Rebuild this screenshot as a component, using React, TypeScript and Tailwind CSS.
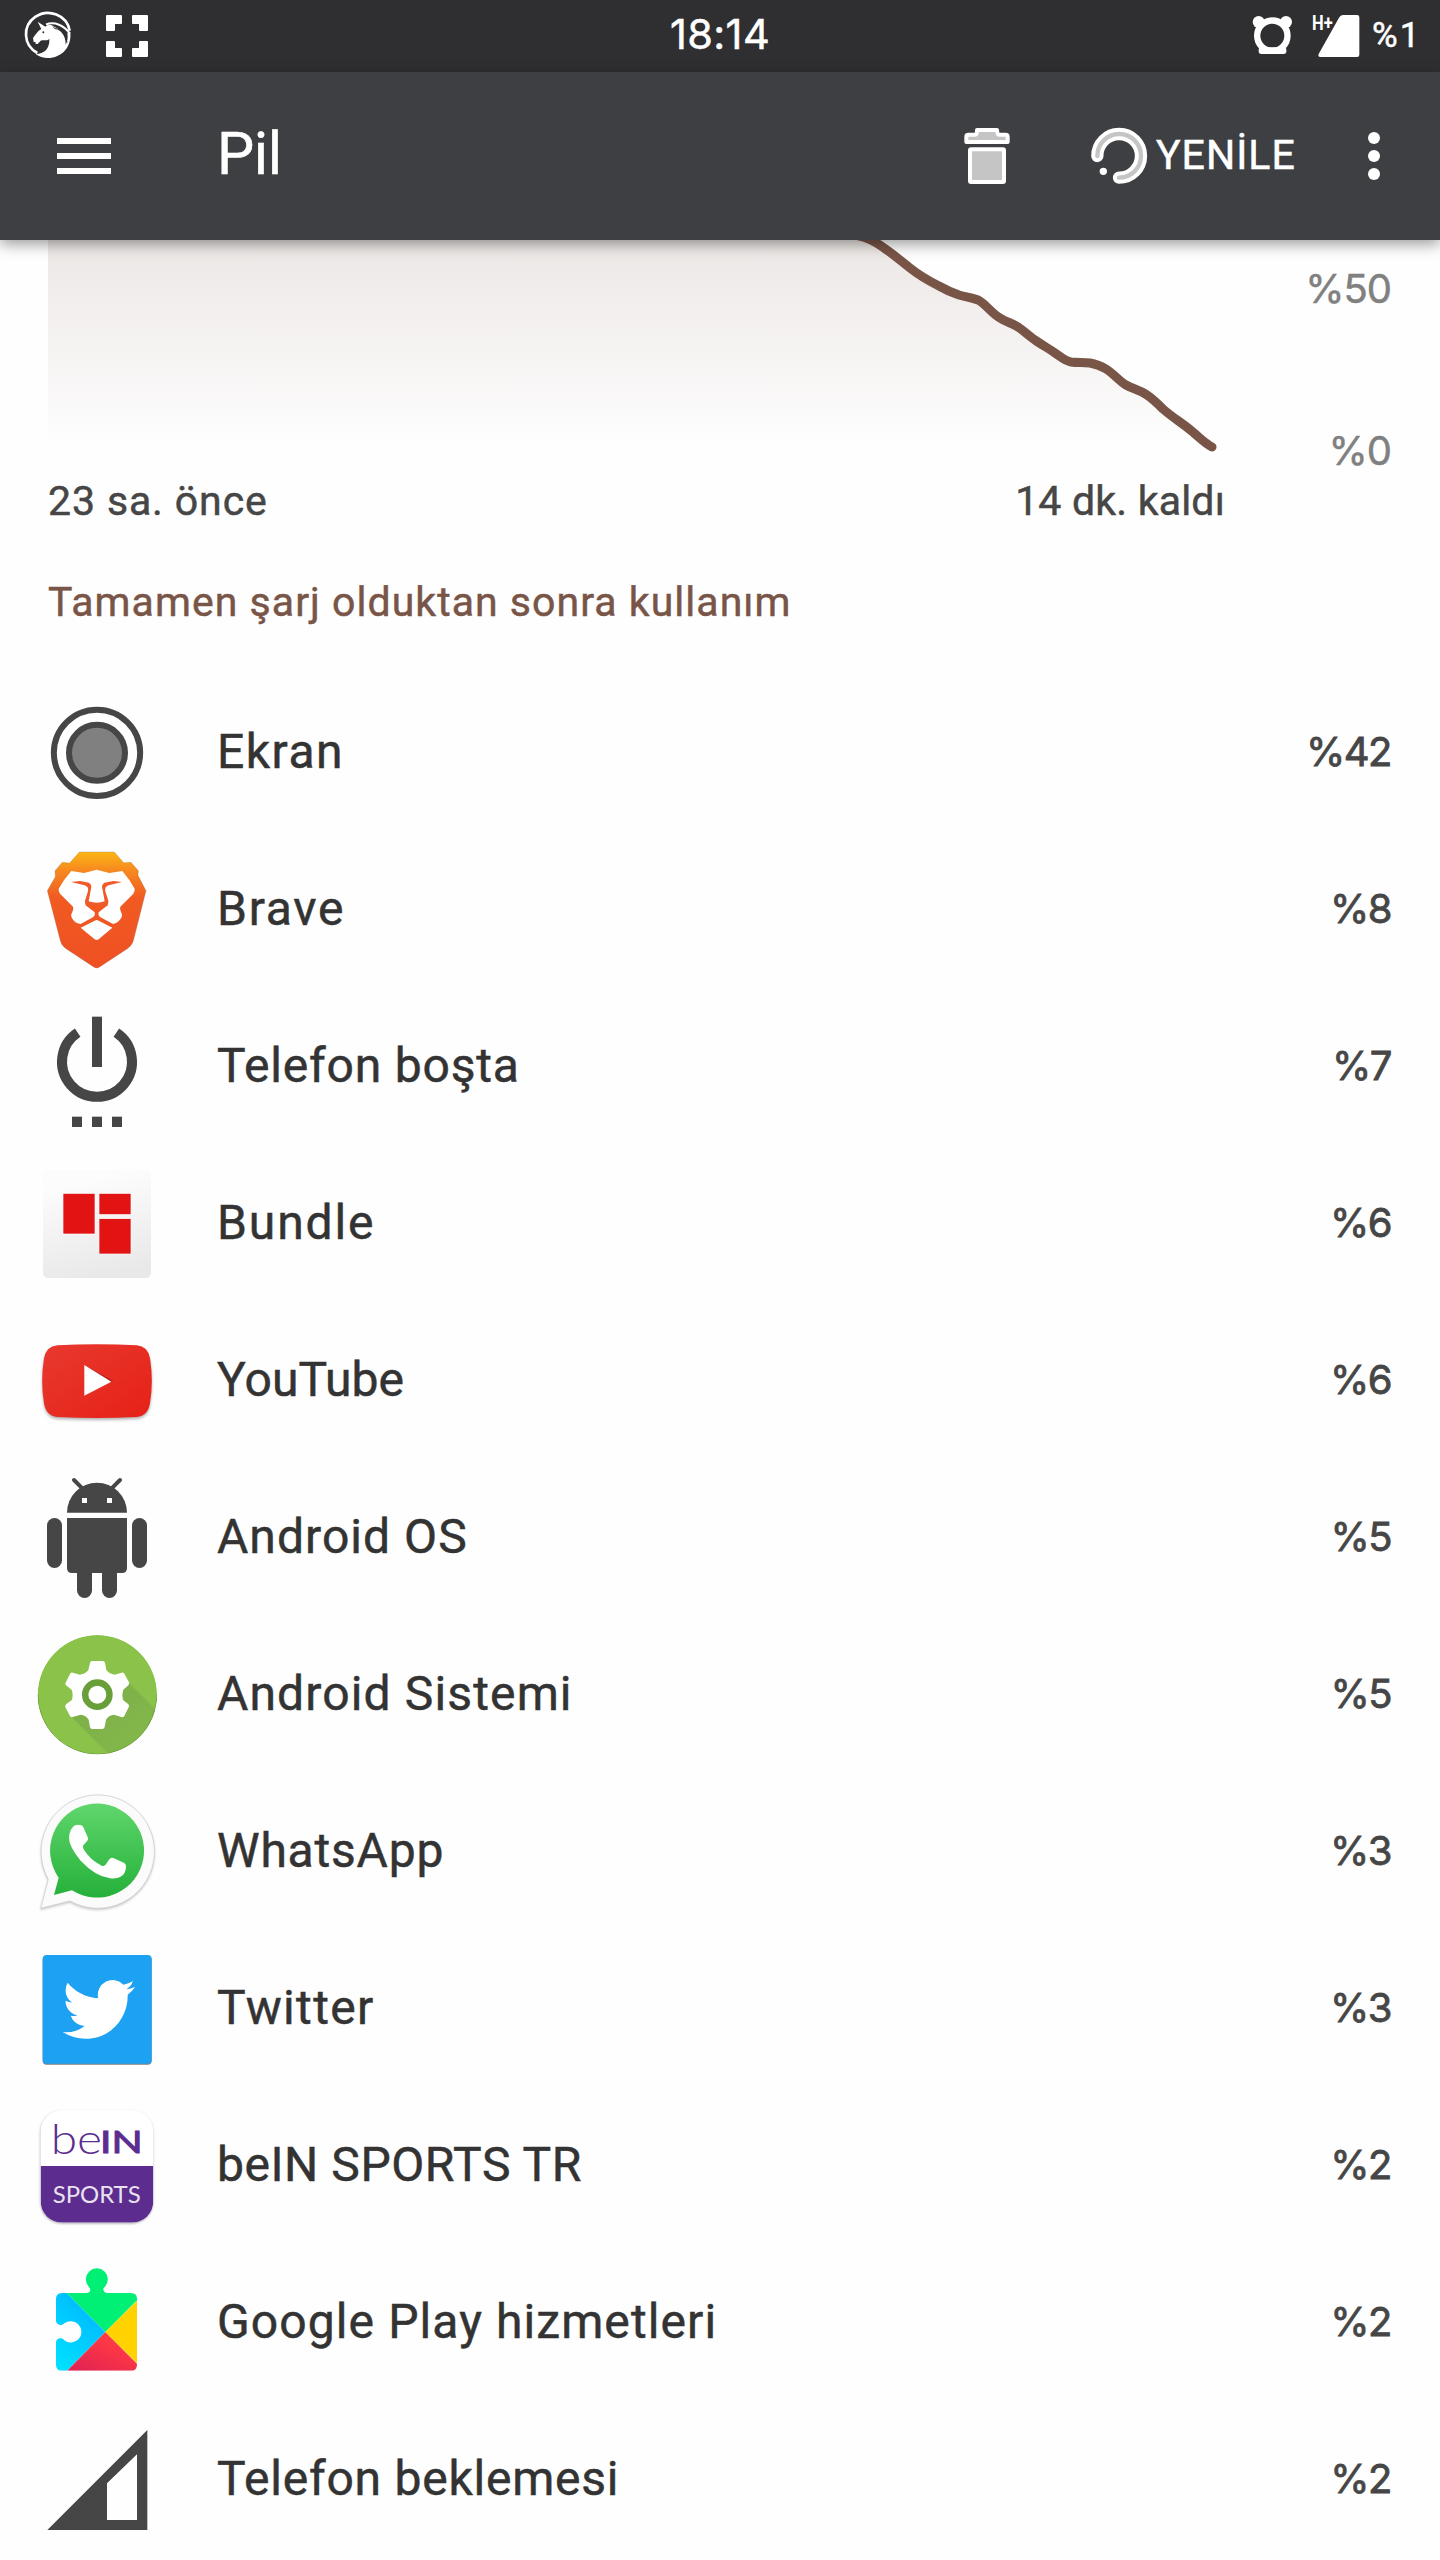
import type { ReactNode } from "react";

/* ---------------------------------------------------------------- */
/* Data                                                             */
/* ---------------------------------------------------------------- */
const apps = [
  { name: "Ekran", usage: "%42", icon: <ScreenIcon />, box: "6 -18 450 471", tracking: "tracking-[1.5px]" },
  { name: "Brave", usage: "%8", icon: <BraveIcon />, box: "6 453 450 471", tracking: "tracking-[1.75px]" },
  { name: "Telefon boşta", usage: "%7", icon: <PowerIcon />, box: "6 -6 450 471", tracking: "tracking-[0.8px]" },
  { name: "Bundle", usage: "%6", icon: <BundleIcon />, box: "6 465 450 471", tracking: "tracking-[1.9px]" },
  { name: "YouTube", usage: "%6", icon: <YouTubeIcon />, box: "6 -24 450 471", tracking: "tracking-[0.1px]" },
  { name: "Android OS", usage: "%5", icon: <AndroidIcon />, box: "6 447 450 471", tracking: "tracking-[1.05px]" },
  { name: "Android Sistemi", usage: "%5", icon: <SystemIcon />, box: "6 -12 450 471", tracking: "tracking-[1.14px]" },
  { name: "WhatsApp", usage: "%3", icon: <WhatsAppIcon />, box: "6 459 450 471", tracking: "tracking-[0.8px]" },
  { name: "Twitter", usage: "%3", icon: <TwitterIcon />, box: "6 0 450 471", tracking: "tracking-[1.35px]" },
  { name: "beIN SPORTS TR", usage: "%2", icon: <BeinIcon />, box: "6 471 450 471", tracking: "tracking-[0.55px]" },
  { name: "Google Play hizmetleri", usage: "%2", icon: <PlayServicesIcon />, box: "6 12 450 471", tracking: "tracking-[1.1px]" },
  { name: "Telefon beklemesi", usage: "%2", icon: <SignalIcon />, box: "6 483 450 471", tracking: "tracking-[0.77px]" },
];

/* ---------------------------------------------------------------- */
/* Page                                                             */
/* ---------------------------------------------------------------- */
export default function App() {
  return (
    <div className="flex h-[2560px] w-[1440px] flex-col overflow-hidden bg-[#fefefe] font-['Roboto',sans-serif] text-[#464646] [-webkit-text-stroke:0.5px]">
      <StatusBar />
      <AppBar />
      <BatteryChart />
      <h2 className="mt-[60px] pl-12 text-[41px] leading-[41px] tracking-[1.04px] text-[#795548]">
        Tamamen şarj olduktan sonra kullanım
      </h2>
      <ul className="mt-[51px]">
        {apps.map((a) => (
          <UsageRow key={a.name} name={a.name} usage={a.usage} box={a.box} tracking={a.tracking}>
            {a.icon}
          </UsageRow>
        ))}
      </ul>
    </div>
  );
}

/* ---------------------------------------------------------------- */
/* Status bar                                                       */
/* ---------------------------------------------------------------- */
function StatusBar() {
  return (
    <div className="grid h-[72px] shrink-0 grid-cols-[1fr_auto_1fr] bg-[#2f2f31] text-white">
      <svg className="h-[72px] w-[160px]" viewBox="0 0 480 216" fill="#fff">
        <path d="M209 92A66 64 0 1 0 112 159" fill="none" stroke="#fff" strokeWidth="8" />
        <path d="M113 65L136 80C142 74 150 73 158 77C180 88 198 104 197 134C203 122 204 112 202 100L211 96C216 142 184 174 144 174C130 174 117 170 107 162C132 162 150 146 148 116C141 124 130 119 122 122L113 132L106 131L107 126L101 126L99 114C108 103 112 94 124 87Z" />
        <path d="M138 73C164 64 192 76 209 100" fill="none" stroke="#fff" strokeWidth="6" />
        <path d="M160 80Q162 88 172 87Q196 96 201 128" fill="none" stroke="#2f2f31" strokeWidth="3" />
        <circle cx="130" cy="97" r="3" fill="#2f2f31" />
        <g stroke="#fff" strokeWidth="6" strokeLinejoin="round">
          <path d="M321 48h42v21h-21v21h-21z" />
          <path d="M441 48h-42v21h21v21h21z" />
          <path d="M321 168h42v-21h-21v-21h-21z" />
          <path d="M441 168h-42v-21h21v-21h21z" />
        </g>
      </svg>
      <span className="self-center pb-0.5 font-['Inter',sans-serif] text-[41.5px] leading-none tracking-[0.4px]">
        18:14
      </span>
      <div className="flex items-center justify-end pr-6">
        <svg className="h-[72px] w-[120px]" viewBox="620 0 360 216" fill="#fff">
          <circle cx="699" cy="107" r="45.5" fill="none" stroke="#fff" strokeWidth="19" />
          <circle cx="658" cy="66" r="18" />
          <circle cx="740" cy="66" r="18" />
          <rect x="658" y="142" width="83" height="20" rx="8" />
          <path d="M911 45H953Q960 45 960 52V164Q960 171 953 171H843Q835 171 838 162L899 53Q903 45 911 45Z" />
          <text x="818" y="90" fontSize="62" fontWeight="700" textLength="62" lengthAdjust="spacingAndGlyphs">
            H+
          </text>
        </svg>
        <span className="w-[50px] pb-0.5 pl-[6px] text-[35px] leading-none tracking-[2px]">%1</span>
      </div>
    </div>
  );
}

/* ---------------------------------------------------------------- */
/* App bar                                                          */
/* ---------------------------------------------------------------- */
function AppBar() {
  return (
    <header className="relative z-10 flex h-[168px] shrink-0 items-center bg-[#3e3f43] pr-[55px] text-white shadow-[0_4px_14px_rgba(0,0,0,0.4)]">
      <svg className="h-[168px] w-[217px]" viewBox="0 216 651 504" fill="#fff">
        <rect x="171" y="414" width="162" height="18" />
        <rect x="171" y="459" width="162" height="18" />
        <rect x="171" y="504" width="162" height="18" />
      </svg>
      <h1 className="pb-1.5 text-[59px] leading-none tracking-[-0.4px]">Pil</h1>
      <svg className="ml-auto h-[168px] w-[55px]" viewBox="960 216 165 504">
        <g fill="#c5c5c5" stroke="#fff" strokeWidth="12" strokeLinejoin="round">
          <path d="M979 410Q979 404 985 404H1007Q1011 403 1011 390H1071Q1072 403 1076 404H1097Q1103 404 1103 410V426H979Z" />
          <rect x="990" y="448" width="102" height="98" rx="3" />
        </g>
      </svg>
      <svg className="ml-[75px] h-[168px] w-[60px]" viewBox="150 216 180 504" fill="none" strokeLinecap="round">
        <path d="M172 468A65.5 65.5 0 1 1 237 533" stroke="#fff" strokeWidth="37" />
        <path d="M172 468A65.5 65.5 0 1 1 237 533" stroke="#c5c5c5" strokeWidth="13" />
        <circle cx="190" cy="514" r="11" fill="#fff" />
      </svg>
      <span className="ml-[6px] w-[207px] pb-0.5 text-[41px] leading-none tracking-[1px]">YENİLE</span>
      <svg className="h-[168px] w-[22px]" viewBox="969 216 66 504" fill="#fff">
        <circle cx="1002" cy="414" r="18" />
        <circle cx="1002" cy="468" r="18" />
        <circle cx="1002" cy="522" r="18" />
      </svg>
    </header>
  );
}

/* ---------------------------------------------------------------- */
/* Battery level over time                                          */
/* ---------------------------------------------------------------- */
const LEVEL =
  "C866 -4 876 2 884 8C893 14 901 21 910 28C920 36 929 41 939 46C946 50 953 53 959 55C966 57 972 58 978 60C986 64 991 73 1000 78C1006 82 1012 83 1018 87C1024 91 1029 96 1035 100C1042 105 1048 108 1055 113C1061 117 1065 121 1071 122C1078 123 1083 122 1090 123C1096 124 1101 126 1106 129C1114 134 1119 141 1126 145C1133 149 1140 150 1147 155C1153 159 1158 164 1163 169C1173 178 1184 184 1194 193C1201 199 1206 204 1212 207";

function BatteryChart() {
  return (
    <section className="shrink-0">
      <div className="flex h-[241px] justify-between">
        <svg className="h-[241px] w-[1240px]" viewBox="0 0 1240 241">
          <defs>
            <linearGradient id="level" x1="0" y1="0" x2="0" y2="1">
              <stop offset="0" stopColor="#795548" stopOpacity="0.14" />
              <stop offset="1" stopColor="#795548" stopOpacity="0" />
            </linearGradient>
          </defs>
          <path d={`M48 -6H853${LEVEL}H48Z`} fill="url(#level)" />
          <path d={`M853 -5${LEVEL}`} fill="none" stroke="#795548" strokeWidth="9" strokeLinecap="round" />
        </svg>
        <div className="flex flex-col items-end gap-[122px] pr-[49px] pt-[29px] font-['Inter',sans-serif] text-[40px] leading-none tracking-[-1px] text-[#808080]">
          <span>%50</span>
          <span>%0</span>
        </div>
      </div>
      <div className="flex w-[1225px] justify-between pl-12 text-[41px] leading-[41px]">
        <span className="tracking-[0.88px]">23 sa. önce</span>
        <span className="tracking-[0.2px]">14 dk. kaldı</span>
      </div>
    </section>
  );
}

/* ---------------------------------------------------------------- */
/* List row                                                         */
/* ---------------------------------------------------------------- */
type UsageRowProps = {
  name: string;
  usage: string;
  box: string;
  tracking: string;
  children: ReactNode;
};

function UsageRow({ name, usage, box, tracking, children }: UsageRowProps) {
  return (
    <li className="flex h-[157px] items-center pl-[22px] pr-[49px]">
      <svg className="h-[157px] w-[150px] shrink-0 [-webkit-text-stroke:0]" viewBox={box}>
        {children}
      </svg>
      <span className={`ml-[45px] pb-0.5 text-[48px] leading-none text-[#333] ${tracking}`}>{name}</span>
      <span className="ml-auto pb-0.5 font-['Inter',sans-serif] text-[40px] leading-none tracking-[-1.5px] [-webkit-text-stroke:0.8px]">
        {usage}
      </span>
    </li>
  );
}

/* ---------------------------------------------------------------- */
/* Icons                                                            */
/* ---------------------------------------------------------------- */
function ScreenIcon() {
  return (
    <g stroke="#464646" strokeWidth="18">
      <circle cx="231" cy="218.5" r="129.5" fill="none" />
      <circle cx="231" cy="218.5" r="84" fill="#808080" />
    </g>
  );
}

function BraveIcon() {
  return (
    <>
      <linearGradient id="brave" x1="0" y1="0" x2="0" y2="1">
        <stop offset="0" stopColor="#fbb714" />
        <stop offset="0.15" stopColor="#f68b1f" />
        <stop offset="0.4" stopColor="#f15a22" />
        <stop offset="1" stopColor="#ef5023" />
      </linearGradient>
      <path
        d="M178 516H283L311 548L333 547L355 572L354 586L378 632L340 782Q336 796 322 806L240 860Q230 868 220 860L138 806Q124 796 121 782L82 632L106 590L105 572L127 547L149 549Z"
        fill="url(#brave)"
        stroke="#8a6a5c"
        strokeOpacity="0.4"
        strokeWidth="2"
      />
      <path
        d="M230 569L268 579L307 573Q330 600 344 626Q345 634 340 641L301 680Q298 688 303 696Q309 706 303 715Q294 730 279 732L240 711Q233 705 236 697L263 676H197L224 697Q227 705 220 711L182 732Q166 730 157 716Q150 706 157 696Q162 688 159 680L120 641Q115 634 116 626Q130 600 154 573L192 579Z"
        fill="#fff"
      />
      <path
        d="M153 606L180 603L207 608Q214 612 214 620L206 664Q218 668 230 668Q242 668 254 664L246 620Q246 612 253 608L280 603L306 606L266 616Q253 621 256 634L265 662Q266 670 262 678H198Q194 670 195 662L204 634Q207 621 194 616Z"
        fill="#f0592a"
      />
      <path d="M224 722Q230 718 236 722L277 743L237 777Q230 783 223 777L182 743Z" fill="#fff" />
    </>
  );
}

function PowerIcon() {
  return (
    <g fill="#464646">
      <path d="M173 128A105 105 0 1 0 289 128" fill="none" stroke="#464646" strokeWidth="30" />
      <rect x="216" y="80" width="30" height="151" />
      <rect x="156" y="380" width="30" height="31" />
      <rect x="216" y="380" width="30" height="31" />
      <rect x="276" y="380" width="30" height="31" />
    </g>
  );
}

function BundleIcon() {
  return (
    <>
      <linearGradient id="bundle" x1="0.4" y1="0.1" x2="0.6" y2="1">
        <stop offset="0" stopColor="#fcfcfc" />
        <stop offset="1" stopColor="#e8e8e8" />
      </linearGradient>
      <rect x="69" y="540" width="324" height="324" rx="16" fill="url(#bundle)" />
      <g fill="#e21313" stroke="#fff" strokeWidth="2">
        <rect x="129" y="610" width="96" height="122" />
        <rect x="237" y="610" width="96" height="64" />
        <rect x="237" y="686" width="96" height="106" />
      </g>
    </>
  );
}

function YouTubeIcon() {
  return (
    <>
      <linearGradient id="youtube" x1="0" y1="0" x2="1" y2="1">
        <stop offset="0" stopColor="#e8392f" />
        <stop offset="1" stopColor="#e62117" />
      </linearGradient>
      <path
        className="drop-shadow-[0_6px_5px_rgba(0,0,0,0.3)]"
        d="M112 106Q231 99 350 106Q384 109 390 145Q401 213 390 280Q384 318 350 321Q231 327 112 321Q78 318 72 280Q61 213 72 145Q78 109 112 106Z"
        fill="url(#youtube)"
      />
      <path d="M193 165L280 213L266 219Z" fill="#b3211b" />
      <path d="M193 165L274 215L193 257Z" fill="#fff" />
    </>
  );
}

function AndroidIcon() {
  return (
    <g fill="#464646">
      <path d="M141 608A90 90 0 0 1 321 608Z" />
      <path d="M162 510L190 538M300 510L272 538" stroke="#464646" strokeWidth="12" strokeLinecap="round" />
      <rect x="186" y="564" width="15" height="15" fill="#fefefe" />
      <rect x="261" y="564" width="15" height="15" fill="#fefefe" />
      <path d="M141 624H321V774Q321 789 306 789H156Q141 789 141 774Z" />
      <rect x="81" y="624" width="45" height="150" rx="22.5" />
      <rect x="336" y="624" width="45" height="150" rx="22.5" />
      <rect x="171" y="740" width="45" height="124" rx="22.5" />
      <rect x="246" y="740" width="45" height="124" rx="22.5" />
    </g>
  );
}

function SystemIcon() {
  return (
    <>
      <clipPath id="system">
        <circle cx="232" cy="224" r="179" />
      </clipPath>
      <linearGradient id="system-shade" x1="0" y1="0" x2="1" y2="1">
        <stop offset="0" stopColor="#7cad48" />
        <stop offset="0.4" stopColor="#80b24a" />
        <stop offset="1" stopColor="#87bd4a" />
      </linearGradient>
      <g clipPath="url(#system)">
        <circle cx="232" cy="224" r="179" fill="#8bc34a" />
        <path d="M152 289L328 190L440 302V440H303Z" fill="url(#system-shade)" />
        <path d="M53 222A179 179 0 0 0 411 222" fill="none" stroke="#6a9a3a" strokeWidth="3" transform="translate(0 2)" />
      </g>
      <path
        d="M216 123H248Q254 123 255 129L259 150Q268 162 284 164L305 158Q310 156 313 161L327 187Q329 192 325 196L310 209Q304 225 310 241L325 253Q329 258 326 262L313 288Q309 293 304 291L282 284Q266 286 258 299L254 321Q252 327 247 327H217Q211 327 210 321L206 299Q198 286 182 284L158 291Q154 293 150 288L137 263Q134 258 138 253L155 241Q161 225 155 209L138 196Q134 192 137 188L150 162Q153 157 158 158L180 164Q196 162 205 150L210 129Q211 123 216 123Z"
        fill="#fff"
      />
      <circle cx="232" cy="224" r="36.5" fill="none" stroke="#689f38" strokeWidth="19" />
    </>
  );
}

function WhatsAppIcon() {
  return (
    <>
      <linearGradient id="whatsapp" x1="0" y1="0" x2="0" y2="1">
        <stop offset="0" stopColor="#60d66c" />
        <stop offset="1" stopColor="#25b03a" />
      </linearGradient>
      <path
        className="drop-shadow-[0_4px_3px_rgba(0,0,0,0.22)]"
        d="M85 778A170 170 0 1 1 150 843L62 865Z"
        fill="#fbfbfb"
        stroke="#c8c8c8"
        strokeWidth="2"
        strokeLinejoin="round"
      />
      <path d="M116 773A141 141 0 1 1 156 811L102 825Z" fill="url(#whatsapp)" />
      <path
        d="M165 616Q175 612 184 616Q188 618 190 622L203 651Q206 657 202 662L190 676Q187 682 191 688Q210 720 245 737Q251 740 256 735L268 718Q273 711 280 714L313 729Q319 733 318 741Q317 757 308 766Q292 778 270 775Q225 768 182 722Q148 682 147 655Q148 626 165 616Z"
        fill="#fff"
      />
    </>
  );
}

function TwitterIcon() {
  return (
    <>
      <rect
        className="drop-shadow-[0_3px_2px_rgba(0,0,0,0.5)]"
        x="68"
        y="75"
        width="327"
        height="326"
        rx="12"
        fill="#1da1f2"
      />
      <path
        transform="translate(128 129.5) scale(9.05)"
        d="M23.953 4.57a10 10 0 01-2.825.775 4.958 4.958 0 002.163-2.723c-.951.555-2.005.959-3.127 1.184a4.92 4.92 0 00-8.384 4.482C7.69 8.095 4.067 6.13 1.64 3.162a4.822 4.822 0 00-.666 2.475c0 1.71.87 3.213 2.188 4.096a4.904 4.904 0 01-2.228-.616v.06a4.923 4.923 0 003.946 4.827 4.996 4.996 0 01-2.212.085 4.936 4.936 0 004.604 3.417 9.867 9.867 0 01-6.102 2.105c-.39 0-.779-.023-1.17-.067a13.995 13.995 0 007.557 2.209c9.053 0 13.998-7.496 13.998-13.985 0-.21 0-.42-.015-.63A9.935 9.935 0 0024 4.59z"
        fill="#fff"
      />
    </>
  );
}

function BeinIcon() {
  return (
    <>
      <clipPath id="bein">
        <rect x="62" y="540" width="338" height="338" rx="64" />
      </clipPath>
      <rect
        className="drop-shadow-[-1px_3px_3px_rgba(0,0,0,0.3)]"
        x="62"
        y="540"
        width="338"
        height="338"
        rx="64"
        fill="#fff"
      />
      <rect x="62" y="708" width="338" height="170" fill="#5c2d8f" clipPath="url(#bein)" />
      <g fill="#5c2d8f" fontFamily="Lato, sans-serif">
        <text x="92" y="671" fontSize="124" fontWeight="300" textLength="154" lengthAdjust="spacingAndGlyphs">
          be
        </text>
        <text x="240" y="670" fontSize="94" fontWeight="400" stroke="#5c2d8f" strokeWidth="3" textLength="128" lengthAdjust="spacingAndGlyphs">
          IN
        </text>
        <text x="98" y="818" fontSize="70" fill="#e9e2f1" textLength="264" lengthAdjust="spacingAndGlyphs">
          SPORTS
        </text>
      </g>
    </>
  );
}

function PlayServicesIcon() {
  return (
    <>
      <clipPath id="puzzle">
        <path d="M126 159H200Q210 158 211 150Q211 144 206 140A33 33 0 1 1 255 140Q249 144 250 150Q252 158 260 159H333Q351 159 351 177V374Q351 392 333 392H126Q108 392 108 374V306Q110 294 124 295Q130 297 133 301A32 32 0 1 0 133 250Q130 254 124 255Q110 255 108 244V177Q108 159 126 159Z" />
      </clipPath>
      <linearGradient id="puzzle-blue" x1="0.6" y1="0.2" x2="0.3" y2="0.8">
        <stop offset="0" stopColor="#00baff" />
        <stop offset="1" stopColor="#00e3ff" />
      </linearGradient>
      <linearGradient id="puzzle-red" x1="1" y1="0" x2="0" y2="1">
        <stop offset="0.3" stopColor="#ff3a44" />
        <stop offset="1" stopColor="#d81b57" />
      </linearGradient>
      <g clipPath="url(#puzzle)">
        <path d="M256 276L56 74H458Z" fill="#00f076" />
        <path d="M256 276L56 74V478Z" fill="url(#puzzle-blue)" />
        <path d="M256 276L120 414H394Z" fill="url(#puzzle-red)" />
        <path d="M256 276L356 177V375Z" fill="#ffd200" />
      </g>
    </>
  );
}

function SignalIcon() {
  return <path fillRule="evenodd" d="M82 870L382 570V870ZM261 730V840H351V643Z" fill="#464646" />;
}
